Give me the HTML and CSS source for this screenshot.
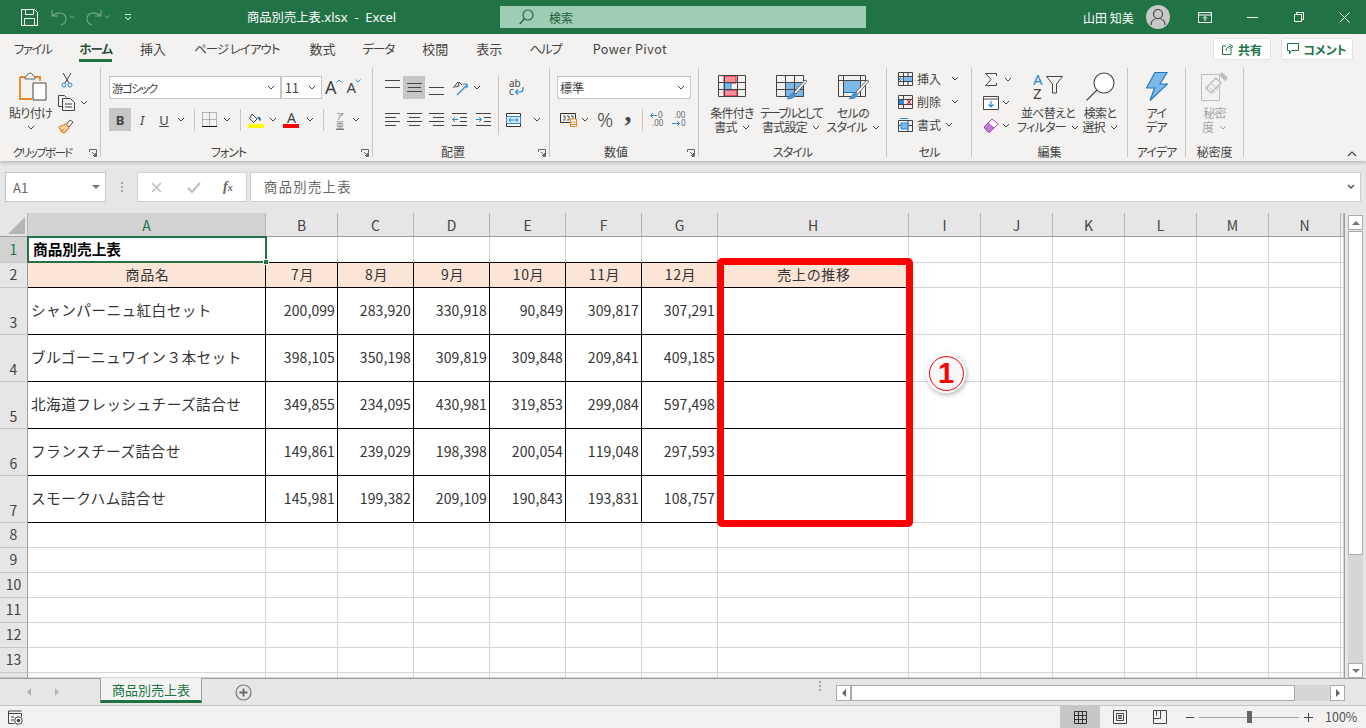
FILE: index.html
```html
<!DOCTYPE html>
<html lang="ja">
<head>
<meta charset="utf-8">
<title>商品別売上表.xlsx - Excel</title>
<link rel="stylesheet" href="styles.css">
</head>
<body>
<header class="titlebar">
  <div class="qat">
    <svg class="ic-save" width="17" height="17" viewBox="0 0 17 17"><path d="M.5.500h13l3 3v13H.5zM4.500.5v5h8v-5M3.500 16.500v-7h10v7" fill="none" stroke="#fff"/></svg>
    <svg class="ic-undo" width="16" height="17" viewBox="0 0 16 17"><path d="M1 1v6h6M1.500 7C5 2.500 15 3 15 10c0 3-2 5-5 6" fill="none" stroke="#6fa787" stroke-width="1.200"/></svg>
    <svg class="ic-qchev" width="6" height="4" viewBox="0 0 6 4"><path d="M.5.500L3 3 5.500.5" fill="none" stroke="#6fa787"/></svg>
    <svg class="ic-redo" width="16" height="17" viewBox="0 0 16 17"><path d="M15 1v6H9M14.500 7C11 2.500 1 3 1 10c0 3 2 5 5 6" fill="none" stroke="#6fa787" stroke-width="1.200"/></svg>
    <svg class="ic-qchev" width="6" height="4" viewBox="0 0 6 4"><path d="M.5.500L3 3 5.500.5" fill="none" stroke="#6fa787"/></svg>
    <svg class="ic-custom" width="8" height="6" viewBox="0 0 8 6"><path d="M1 .5h6M1 3l3 2.500L7 3" fill="none" stroke="#fff"/></svg>
  </div>
  <div class="doc-title">商品別売上表<span class="lat">.xlsx&nbsp; - &nbsp;Excel</span></div>
  <div class="searchbox">
    <svg width="15" height="16" viewBox="0 0 15 16"><circle cx="9" cy="6" r="5" fill="none" stroke="#1d5c3a" stroke-width="1.100"/><path d="M5.500 9.500L.8 15" stroke="#1d5c3a" stroke-width="1.200"/></svg>
    <span>検索</span>
  </div>
  <div class="user">山田 知美</div>
  <div class="avatar"><svg width="16" height="18" viewBox="0 0 16 18"><circle cx="8" cy="6" r="4.500" fill="none" stroke="#444" stroke-width="1.200"/><path d="M1 17c0-4 3-6.500 7-6.500s7 2.500 7 6.500" fill="none" stroke="#444" stroke-width="1.200"/></svg></div>
  <div class="winbtns">
    <svg width="14" height="11" viewBox="0 0 14 11"><path d="M.5.500h13v10H.5zM.5 3h13M7 9V4.500M5 6.500l2-2 2 2" fill="none" stroke="#fff"/></svg>
    <svg width="11" height="1" viewBox="0 0 11 1"><path d="M0 .5h11" stroke="#fff"/></svg>
    <svg width="10" height="10" viewBox="0 0 10 10"><path d="M.5 2.500h7v7h-7zM2.500 2.500v-2h7v7h-2" fill="none" stroke="#fff"/></svg>
    <svg width="11" height="11" viewBox="0 0 11 11"><path d="M.5.500l10 10M10.500.5l-10 10" stroke="#fff"/></svg>
  </div>
</header>

<nav class="tabs">
  <span class="tab kana k2">ファイル</span><span class="tab active kana">ホーム</span><span class="tab">挿入</span><span class="tab kana">ページ レイアウト</span><span class="tab nudge">数式</span><span class="tab kana">データ</span><span class="tab">校閲</span><span class="tab">表示</span><span class="tab kana k3">ヘルプ</span><span class="tab pp">Power Pivot</span>
  <div class="tab-actions">
    <button class="act act-share"><svg width="12" height="12" viewBox="0 0 12 12"><path d="M9 5.500v6H.5V3H4M4 8c0-3 2-4.500 5-4.500M7.500 1L11 3.500 7.500 6" fill="none" stroke="#217346"/></svg>共有</button>
    <button class="act act-comment"><svg width="12" height="12" viewBox="0 0 12 12"><path d="M.5.500h11v7H4.500L2.500 11V7.500h-2z" fill="none" stroke="#217346"/></svg>コメント</button>
  </div>
</nav>

<section class="ribbon">
  <div class="group g-clip">
    <div class="body row-body">
      <div class="big b-paste">
        <svg class="big-ic" width="28" height="29" viewBox="0 0 28 29"><path d="M1 5h5M16 5h5v4M1 5v22h12" fill="none" stroke="#e8871e" stroke-width="1.800"/><path d="M6 5c2 0 2-4 5-4s3 4 5 4v2H6z" fill="#f3f2f1" stroke="#666"/><path d="M14 11h13v17H14z" fill="#fff" stroke="#444"/></svg>
        <span class="lbl">貼り付け</span>
        <svg class="chev mid" width="8" height="5" viewBox="0 0 8 5"><path d="M1 1l3 3 3-3" fill="none" stroke="#444"/></svg>
      </div>
      <div class="col small-col">
        <div class="srow scis"><svg width="12" height="16" viewBox="0 0 12 16"><path d="M2 1l6 10M10 1L4 11" stroke="#444"/><circle cx="3" cy="13" r="2" fill="none" stroke="#2b88d8"/><circle cx="9" cy="13" r="2" fill="none" stroke="#2b88d8"/></svg></div>
        <div class="srow"><svg width="17" height="16" viewBox="0 0 17 16"><path d="M4 11.500H.5v-11h6l2 2" fill="none" stroke="#444"/><path d="M4.500 3.500h8l4 4v8h-12zM7 9h7M7 12h7" fill="#f3f2f1" stroke="#444"/></svg><svg class="chev c-copy" width="8" height="5" viewBox="0 0 8 5"><path d="M1 1l3 3 3-3" fill="none" stroke="#444"/></svg></div>
        <div class="srow"><svg width="16" height="16" viewBox="0 0 16 16"><path d="M8 7l4-5 3 2-4 5z" fill="none" stroke="#555"/><path d="M1 9l7-3 3 4-5 5-2-1 1-2-2 1z" fill="#f8d9a8" stroke="#e8871e" stroke-width="1.200"/></svg></div>
      </div>
    </div>
    <div class="glabel off kn clip">クリップボード</div>
    <svg class="launch" width="8" height="8" viewBox="0 0 8 8"><path d="M.5 3V.5H7.500v7H5M3 3l3.500 3.500M6.500 4v2.500H4" fill="none" stroke="#666"/></svg>
  </div>

  <div class="group g-font">
    <div class="body">
      <div class="trow">
        <div class="combo c-font"><span class="fname">游ゴシック</span><svg width="8" height="5" viewBox="0 0 8 5"><path d="M1 1l3 3 3-3" fill="none" stroke="#444"/></svg></div>
        <div class="combo c-size"><span>11</span><svg width="8" height="5" viewBox="0 0 8 5"><path d="M1 1l3 3 3-3" fill="none" stroke="#444"/></svg></div>
        <div class="grow-a g-up">A<svg width="6" height="4" viewBox="0 0 6 4"><path d="M.5 3.500L3 1l2.500 2.500" fill="none" stroke="#2b88d8"/></svg></div>
        <div class="grow-a g-down">A<svg width="6" height="4" viewBox="0 0 6 4"><path d="M.5.500L3 3 5.500.5" fill="none" stroke="#2b88d8"/></svg></div>
      </div>
      <div class="trow second">
        <div class="tb w22 on bold">B</div>
        <div class="tb w22 ital">I</div>
        <div class="tb w22 under">U</div>
        <div class="tb w12"><svg width="8" height="5" viewBox="0 0 8 5"><path d="M1 1l3 3 3-3" fill="none" stroke="#444"/></svg></div>
        <div class="tb w14"><i class="vsep"></i></div>
        <div class="tb w17"><svg width="15" height="15" viewBox="0 0 15 15"><path d="M.5.500h14M.5 7.500h14M7.500.5v14M.5.500v14M14.500.5v14" fill="none" stroke="#777" stroke-dasharray="1 1"/><path d="M0 14.500h15" stroke="#111"/></svg></div>
        <div class="tb w18"><svg width="8" height="5" viewBox="0 0 8 5"><path d="M1 1l3 3 3-3" fill="none" stroke="#444"/></svg></div>
        <div class="tb w8"><i class="vsep"></i></div>
        <div class="tb w23"><svg width="16" height="16" viewBox="0 0 16 16"><path d="M4 2l5 5-3.500 3.500L1.500 6.500z" fill="none" stroke="#444"/><path d="M9 5c3-1 4 1 4 4l-2-1z" fill="#1f6fb5"/><path d="M0 12h16v4H0z" fill="#ffff00"/></svg></div>
        <div class="tb w12"><svg width="8" height="5" viewBox="0 0 8 5"><path d="M1 1l3 3 3-3" fill="none" stroke="#444"/></svg></div>
        <div class="tb w25 fcolor">A</div>
        <div class="tb w12"><svg width="8" height="5" viewBox="0 0 8 5"><path d="M1 1l3 3 3-3" fill="none" stroke="#444"/></svg></div>
        <div class="tb w14"><i class="vsep"></i></div>
        <div class="tb w20 phon"><span>ア</span><span class="ph2">亜</span></div>
        <div class="tb w12"><svg width="8" height="5" viewBox="0 0 8 5"><path d="M1 1l3 3 3-3" fill="none" stroke="#444"/></svg></div>
      </div>
    </div>
    <div class="glabel off kn">フォント</div>
    <svg class="launch" width="8" height="8" viewBox="0 0 8 8"><path d="M.5 3V.5H7.500v7H5M3 3l3.500 3.500M6.500 4v2.500H4" fill="none" stroke="#666"/></svg>
  </div>

  <div class="group g-align">
    <div class="body row-body">
      <div class="col al-left">
        <div class="trow">
          <div class="tb w22 va-top"><svg width="15" height="8" viewBox="0 0 15 8"><path d="M0 .5h15M0 7.500h15" stroke="#444"/></svg></div>
          <div class="tb w22 on"><svg width="15" height="13" viewBox="0 0 15 13"><path d="M0 2.500h15M1 6.500h13M0 10.500h15" stroke="#444"/></svg></div>
          <div class="tb w22 va-bot"><svg width="15" height="8" viewBox="0 0 15 8"><path d="M0 .5h15M0 7.500h15" stroke="#444"/></svg></div>
          <div class="tb w26"><svg width="16" height="16" viewBox="0 0 16 16"><path d="M1 8l5-6 1 4-4 1M7 2l3 3" fill="none" stroke="#444"/><path d="M5 15L15 5M11 4h4v4" fill="none" stroke="#2b88d8" stroke-width="1.200"/></svg></div>
          <div class="tb w8"><svg width="8" height="5" viewBox="0 0 8 5"><path d="M1 1l3 3 3-3" fill="none" stroke="#444"/></svg></div>
        </div>
        <div class="trow second">
          <div class="tb w22"><svg width="15" height="13" viewBox="0 0 15 13"><path d="M0 .5h15M0 4.500h11M0 8.500h15M0 12.500h11" stroke="#444"/></svg></div>
          <div class="tb w22"><svg width="15" height="13" viewBox="0 0 15 13"><path d="M0 .5h15M2 4.500h11M0 8.500h15M2 12.500h11" stroke="#444"/></svg></div>
          <div class="tb w22"><svg width="15" height="13" viewBox="0 0 15 13"><path d="M0 .5h15M4 4.500h11M0 8.500h15M4 12.500h11" stroke="#444"/></svg></div>
          <div class="tb w24"><svg width="15" height="13" viewBox="0 0 15 13"><path d="M0 .5h15M8 4.500h7M8 8.500h7M0 12.500h15" stroke="#444"/><path d="M6 6.500H.5M3 4L.5 6.500 3 9" fill="none" stroke="#2b88d8"/></svg></div>
          <div class="tb w24"><svg width="15" height="13" viewBox="0 0 15 13"><path d="M0 .5h15M8 4.500h7M8 8.500h7M0 12.500h15" stroke="#444"/><path d="M0 6.500h5.500M3 4l2.500 2.500L3 9" fill="none" stroke="#2b88d8"/></svg></div>
        </div>
      </div>
      <div class="col al-right">
        <div class="trow">
          <div class="tb w34"><svg class="wrap-ic" width="16" height="18" viewBox="0 0 16 18"><text x="1" y="8" class="svg-ab">ab</text><text x="1" y="16" class="svg-ab">c</text><path d="M15 8v2c0 2-1 3-3 3H8M10 10.500L7.500 13l2.500 2.500" fill="none" stroke="#2b88d8" stroke-width="1.200"/></svg></div>
        </div>
        <div class="trow second">
          <div class="tb w28"><svg width="15" height="14" viewBox="0 0 15 14"><path d="M.5.500h14v13H.5zM.5 3.500h14M.5 10.500h14" fill="#fff" stroke="#333"/><path d="M.5 3.500h14v7H.5z" fill="#dbeaf7" stroke="#2b88d8"/><path d="M3 7h9M5 5L3 7l2 2M10 5l2 2-2 2" fill="none" stroke="#2b88d8"/></svg></div>
          <div class="tb w8 ml-chev"><svg width="8" height="5" viewBox="0 0 8 5"><path d="M1 1l3 3 3-3" fill="none" stroke="#444"/></svg></div>
        </div>
      </div>
    </div>
    <div class="glabel off">配置</div>
    <svg class="launch" width="8" height="8" viewBox="0 0 8 8"><path d="M.5 3V.5H7.500v7H5M3 3l3.500 3.500M6.500 4v2.500H4" fill="none" stroke="#666"/></svg>
  </div>

  <div class="group g-num">
    <div class="body">
      <div class="trow">
        <div class="combo c-num"><span>標準</span><svg width="8" height="5" viewBox="0 0 8 5"><path d="M1 1l3 3 3-3" fill="none" stroke="#444"/></svg></div>
      </div>
      <div class="trow second">
        <div class="tb w22"><svg width="17" height="15" viewBox="0 0 17 15"><path d="M.5 1.500h15v9H.5z" fill="#f3f2f1" stroke="#333"/><path d="M3 4h2v4H3M7 4h2v4H7M11 4h2v4h-2" fill="none" stroke="#555"/><path d="M10.500 7h6v7.500h-6zM10.500 10h6M10.500 12.500h6" fill="#fff" stroke="#e8871e"/></svg></div>
        <div class="tb w12"><svg width="8" height="5" viewBox="0 0 8 5"><path d="M1 1l3 3 3-3" fill="none" stroke="#444"/></svg></div>
        <div class="tb w28 pct">%</div>
        <div class="tb w18 cma">,</div>
        <div class="tb w10"><i class="vsep"></i></div>
        <div class="tb w22"><svg class="dec-ic" width="16" height="15" viewBox="0 0 16 15"><text x="8" y="6" class="svg-dec">0</text><text x="2" y="14" class="svg-dec">.00</text><path d="M7 3.500H.5M3 1L.5 3.500 3 6" fill="none" stroke="#2b88d8"/></svg></div>
        <div class="tb w22"><svg class="dec-ic" width="16" height="15" viewBox="0 0 16 15"><text x="2" y="6" class="svg-dec">.00</text><text x="9" y="14" class="svg-dec">0</text><path d="M0 11.500h7M5 9l2.500 2.500L5 14" fill="none" stroke="#2b88d8"/></svg></div>
      </div>
    </div>
    <div class="glabel off">数値</div>
    <svg class="launch" width="8" height="8" viewBox="0 0 8 8"><path d="M.5 3V.5H7.500v7H5M3 3l3.500 3.500M6.500 4v2.500H4" fill="none" stroke="#666"/></svg>
  </div>

  <div class="group g-style">
    <div class="body row-body">
      <div class="big b-cond">
        <svg class="st-ic" width="28" height="22" viewBox="0 0 28 22"><path d="M6 1h12v7H6zM15 15h-9v6h13v-6z" fill="#ff8f99"/><path d="M6 1h12v7H6zM6 15h13v6H6z" fill="none" stroke="#e81123"/><path d="M6 8h7v7H6z" fill="#7db8e8" stroke="#2b88d8"/><path d="M.5.500h27v21H.5zM.5 7.500h27M.5 14.500h27M6.500.5v21M19.500.5v21" fill="none" stroke="#444"/></svg>
        <span class="lbl">条件付き</span>
        <span class="lbl">書式<svg class="chev" width="8" height="5" viewBox="0 0 8 5"><path d="M1 1l3 3 3-3" fill="none" stroke="#444"/></svg></span>
      </div>
      <div class="big b-table">
        <svg class="st-ic" width="31" height="26" viewBox="0 0 31 26"><path d="M9.500 7.500h18v14h-18z" fill="#7db8e8" stroke="#1f6fb5"/><path d="M.5.500h27v21H.5zM.5 7.500h27M.5 14.500h27M9.500.5v21M18.500.5v21" fill="none" stroke="#444"/><path d="M29 5l2 1-11 13-2-2z" fill="#fff" stroke="#666"/><path d="M17 17l3 3c-1 3-5 5-10 4 3-1 3-5 7-7z" fill="#4a90d0"/></svg>
        <span class="lbl tight">テーブルとして</span>
        <span class="lbl">書式設定<svg class="chev" width="8" height="5" viewBox="0 0 8 5"><path d="M1 1l3 3 3-3" fill="none" stroke="#444"/></svg></span>
      </div>
      <div class="big b-cell">
        <svg class="st-ic" width="31" height="26" viewBox="0 0 31 26"><path d="M5.500 5.500h17v12h-17z" fill="#7db8e8" stroke="#1f6fb5"/><path d="M.5.500h27v21H.5zM.5 5.500h27M5.500.5v21M22.500.5v21" fill="none" stroke="#444"/><path d="M29 5l2 1-11 13-2-2z" fill="#fff" stroke="#666"/><path d="M17 17l3 3c-1 3-5 5-10 4 3-1 3-5 7-7z" fill="#4a90d0"/></svg>
        <span class="lbl">セルの</span>
        <span class="lbl">スタイル<svg class="chev" width="8" height="5" viewBox="0 0 8 5"><path d="M1 1l3 3 3-3" fill="none" stroke="#444"/></svg></span>
      </div>
    </div>
    <div class="glabel kn">スタイル</div>
  </div>

  <div class="group g-cells">
    <div class="body col">
      <div class="crow"><svg width="15" height="14" viewBox="0 0 15 14"><path d="M.5.500h14v13H.5zM.5 4.500h14M.5 9.500h14M5.500.5v13M10 .5v13" fill="none" stroke="#444"/><path d="M6 5h8v4H6z" fill="#7db8e8"/><path d="M1 7h5M3 5L1 7l2 2" fill="none" stroke="#2b88d8"/></svg><span>挿入</span><svg class="chev ch-a" width="8" height="5" viewBox="0 0 8 5"><path d="M1 1l3 3 3-3" fill="none" stroke="#444"/></svg></div>
      <div class="crow"><svg width="15" height="14" viewBox="0 0 15 14"><path d="M.5.500h14v13H.5zM.5 4.500h14M.5 9.500h14M5.500.5v13" fill="none" stroke="#444"/><path d="M1 5h5v4H1z" fill="#2b88d8"/><path d="M9 4.500l4 5M13 4.500l-4 5" stroke="#e81123" stroke-width="1.200"/></svg><span>削除</span><svg class="chev ch-a" width="8" height="5" viewBox="0 0 8 5"><path d="M1 1l3 3 3-3" fill="none" stroke="#444"/></svg></div>
      <div class="crow"><svg width="15" height="14" viewBox="0 0 15 14"><path d="M.5 2.500h14v11H.5zM.5 7.500h14M10 2.500v11" fill="none" stroke="#444"/><path d="M3 5h7v6H3z" fill="#7db8e8" stroke="#2b88d8"/><path d="M2 .5h8" stroke="#2b88d8"/></svg><span>書式</span><svg class="chev ch-b" width="8" height="5" viewBox="0 0 8 5"><path d="M1 1l3 3 3-3" fill="none" stroke="#444"/></svg></div>
    </div>
    <div class="glabel kn">セル</div>
  </div>

  <div class="group g-edit">
    <div class="body row-body">
      <div class="col ed-col">
        <div class="erow"><svg class="sig" width="12" height="13" viewBox="0 0 12 13"><path d="M11.500 3V.5H.5L6 6.500.5 12.500h11V10" fill="none" stroke="#444"/></svg><svg class="chev ed-a" width="8" height="5" viewBox="0 0 8 5"><path d="M1 1l3 3 3-3" fill="none" stroke="#444"/></svg></div>
        <div class="erow"><svg width="16" height="14" viewBox="0 0 16 14"><path d="M.5.500h15v13H.5zM.5 3h15" fill="#fff" stroke="#444"/><path d="M8 5v6M5.500 8.500L8 11l2.500-2.500" fill="none" stroke="#2b88d8" stroke-width="1.200"/></svg><svg class="chev ed-b" width="8" height="5" viewBox="0 0 8 5"><path d="M1 1l3 3 3-3" fill="none" stroke="#444"/></svg></div>
        <div class="erow"><svg width="16" height="15" viewBox="0 0 16 15"><path d="M1 9l8-8 6 5-8 8H5z" fill="#fff" stroke="#b146c2"/><path d="M1 9l4-4 6 5-4 4H5z" fill="#c27bd0" stroke="#b146c2"/></svg><svg class="chev ed-b" width="8" height="5" viewBox="0 0 8 5"><path d="M1 1l3 3 3-3" fill="none" stroke="#444"/></svg></div>
      </div>
      <div class="big b-sort">
        <div class="sort-ic"><span class="az"><b>A</b><i>Z</i></span><svg width="17" height="18" viewBox="0 0 17 18"><path d="M.5.500h16L10.500 8v9h-4V8z" fill="none" stroke="#444"/></svg></div>
        <span class="lbl">並べ替えと</span>
        <span class="lbl">フィルター<svg class="chev" width="8" height="5" viewBox="0 0 8 5"><path d="M1 1l3 3 3-3" fill="none" stroke="#444"/></svg></span>
      </div>
      <div class="big b-find">
        <svg class="tall-ic" width="29" height="29" viewBox="0 0 29 29"><circle cx="18" cy="11" r="10" fill="#fff" stroke="#444" stroke-width="1.100"/><path d="M11 18L.5 28.500" stroke="#444" stroke-width="1.100"/></svg>
        <span class="lbl">検索と</span>
        <span class="lbl">選択<svg class="chev" width="8" height="5" viewBox="0 0 8 5"><path d="M1 1l3 3 3-3" fill="none" stroke="#444"/></svg></span>
      </div>
    </div>
    <div class="glabel">編集</div>
  </div>

  <div class="group g-idea">
    <div class="body row-body">
      <div class="big b-full">
        <svg class="tall-ic" width="22" height="29" viewBox="0 0 22 29"><path d="M9 .5h12L14 12h7.500L4 28.500 8.500 16H.5z" fill="#7db8e8" stroke="#1f78c8" stroke-width="1.200"/></svg>
        <span class="lbl">アイ</span>
        <span class="lbl">デア</span>
      </div>
    </div>
    <div class="glabel kn">アイデア</div>
  </div>

  <div class="group g-sens">
    <div class="body row-body">
      <div class="big b-full dis">
        <svg class="tall-ic" width="28" height="29" viewBox="0 0 28 29"><path d="M.5 2.500h18v26H.5z" fill="none" stroke="#bdbdbd"/><path d="M5 16L15 6l5 5-10 10z" fill="#f3f2f1" stroke="#bdbdbd" stroke-width="1.500"/><path d="M8 15l6 6M11 12l6 6" stroke="#bdbdbd"/><path d="M18 3l3-3 6 6-3 3z" fill="#bdbdbd"/></svg>
        <span class="lbl">秘密</span>
        <span class="lbl">度<svg class="chev" width="8" height="5" viewBox="0 0 8 5"><path d="M1 1l3 3 3-3" fill="none" stroke="#a6a6a6"/></svg></span>
      </div>
    </div>
    <div class="glabel">秘密度</div>
  </div>
  <svg class="collapse" width="10" height="6" viewBox="0 0 10 6"><path d="M1 5l4-4 4 4" fill="none" stroke="#444" stroke-width="1.200"/></svg>
</section>

<section class="fbar">
  <div class="namebox"><span>A1</span><i class="tri"></i></div>
  <div class="fdots"><i></i><i></i><i></i></div>
  <div class="fxbtns">
    <svg width="11" height="11" viewBox="0 0 11 11"><path d="M1 1l9 9M10 1l-9 9" stroke="#bdbdbd" stroke-width="1.500"/></svg>
    <svg width="14" height="11" viewBox="0 0 14 11"><path d="M1 6l4 4 8-9" fill="none" stroke="#bdbdbd" stroke-width="2"/></svg>
    <span class="fx">f<small>x</small></span>
  </div>
  <div class="finput"><span>商品別売上表</span><svg width="8" height="5" viewBox="0 0 8 5"><path d="M1 1l3 3 3-3" fill="none" stroke="#555" stroke-width="1.500"/></svg></div>
</section>

<section class="sheetwrap">
  <div class="grid">
    <div class="corner"><svg width="17" height="17" viewBox="0 0 17 17"><path d="M17 0v17H0z" fill="#b5b5b5"/></svg></div><div class="ch sel">A</div><div class="ch">B</div><div class="ch">C</div><div class="ch">D</div><div class="ch">E</div><div class="ch">F</div><div class="ch">G</div><div class="ch">H</div><div class="ch">I</div><div class="ch">J</div><div class="ch">K</div><div class="ch">L</div><div class="ch">M</div><div class="ch">N</div><div class="ch"></div>

    <div class="rh sel r1">1</div><div class="c bb t strong">商品別売上表</div><div class="c bb"></div><div class="c bb"></div><div class="c bb"></div><div class="c bb"></div><div class="c bb"></div><div class="c bb"></div><div class="c bb"></div><div class="c"></div><div class="c"></div><div class="c"></div><div class="c"></div><div class="c"></div><div class="c"></div><div class="c"></div>

    <div class="rh r1">2</div><div class="c b h">商品名</div><div class="c b h">7月</div><div class="c b h">8月</div><div class="c b h">9月</div><div class="c b h">10月</div><div class="c b h">11月</div><div class="c b h">12月</div><div class="c b h">売上の推移</div><div class="c"></div><div class="c"></div><div class="c"></div><div class="c"></div><div class="c"></div><div class="c"></div><div class="c"></div>

    <div class="rh">3</div><div class="c b t">シャンパーニュ紅白セット</div><div class="c b n">200,099</div><div class="c b n">283,920</div><div class="c b n">330,918</div><div class="c b n">90,849</div><div class="c b n">309,817</div><div class="c b n">307,291</div><div class="c b"></div><div class="c"></div><div class="c"></div><div class="c"></div><div class="c"></div><div class="c"></div><div class="c"></div><div class="c"></div>

    <div class="rh">4</div><div class="c b t">ブルゴーニュワイン３本セット</div><div class="c b n">398,105</div><div class="c b n">350,198</div><div class="c b n">309,819</div><div class="c b n">309,848</div><div class="c b n">209,841</div><div class="c b n">409,185</div><div class="c b"></div><div class="c"></div><div class="c"></div><div class="c"></div><div class="c"></div><div class="c"></div><div class="c"></div><div class="c"></div>

    <div class="rh">5</div><div class="c b t">北海道フレッシュチーズ詰合せ</div><div class="c b n">349,855</div><div class="c b n">234,095</div><div class="c b n">430,981</div><div class="c b n">319,853</div><div class="c b n">299,084</div><div class="c b n">597,498</div><div class="c b"></div><div class="c"></div><div class="c"></div><div class="c"></div><div class="c"></div><div class="c"></div><div class="c"></div><div class="c"></div>

    <div class="rh">6</div><div class="c b t">フランスチーズ詰合せ</div><div class="c b n">149,861</div><div class="c b n">239,029</div><div class="c b n">198,398</div><div class="c b n">200,054</div><div class="c b n">119,048</div><div class="c b n">297,593</div><div class="c b"></div><div class="c"></div><div class="c"></div><div class="c"></div><div class="c"></div><div class="c"></div><div class="c"></div><div class="c"></div>

    <div class="rh">7</div><div class="c b t">スモークハム詰合せ</div><div class="c b n">145,981</div><div class="c b n">199,382</div><div class="c b n">209,109</div><div class="c b n">190,843</div><div class="c b n">193,831</div><div class="c b n">108,757</div><div class="c b"></div><div class="c"></div><div class="c"></div><div class="c"></div><div class="c"></div><div class="c"></div><div class="c"></div><div class="c"></div>

    <div class="rh r1">8</div><div class="c"></div><div class="c"></div><div class="c"></div><div class="c"></div><div class="c"></div><div class="c"></div><div class="c"></div><div class="c"></div><div class="c"></div><div class="c"></div><div class="c"></div><div class="c"></div><div class="c"></div><div class="c"></div><div class="c"></div>
    <div class="rh r1">9</div><div class="c"></div><div class="c"></div><div class="c"></div><div class="c"></div><div class="c"></div><div class="c"></div><div class="c"></div><div class="c"></div><div class="c"></div><div class="c"></div><div class="c"></div><div class="c"></div><div class="c"></div><div class="c"></div><div class="c"></div>
    <div class="rh r1">10</div><div class="c"></div><div class="c"></div><div class="c"></div><div class="c"></div><div class="c"></div><div class="c"></div><div class="c"></div><div class="c"></div><div class="c"></div><div class="c"></div><div class="c"></div><div class="c"></div><div class="c"></div><div class="c"></div><div class="c"></div>
    <div class="rh r1">11</div><div class="c"></div><div class="c"></div><div class="c"></div><div class="c"></div><div class="c"></div><div class="c"></div><div class="c"></div><div class="c"></div><div class="c"></div><div class="c"></div><div class="c"></div><div class="c"></div><div class="c"></div><div class="c"></div><div class="c"></div>
    <div class="rh r1">12</div><div class="c"></div><div class="c"></div><div class="c"></div><div class="c"></div><div class="c"></div><div class="c"></div><div class="c"></div><div class="c"></div><div class="c"></div><div class="c"></div><div class="c"></div><div class="c"></div><div class="c"></div><div class="c"></div><div class="c"></div>
    <div class="rh r1">13</div><div class="c"></div><div class="c"></div><div class="c"></div><div class="c"></div><div class="c"></div><div class="c"></div><div class="c"></div><div class="c"></div><div class="c"></div><div class="c"></div><div class="c"></div><div class="c"></div><div class="c"></div><div class="c"></div><div class="c"></div>
    <div class="rh"></div><div class="c"></div><div class="c"></div><div class="c"></div><div class="c"></div><div class="c"></div><div class="c"></div><div class="c"></div><div class="c"></div><div class="c"></div><div class="c"></div><div class="c"></div><div class="c"></div><div class="c"></div><div class="c"></div><div class="c"></div>
  </div>
  <div class="vscroll">
    <div class="sbtn"><i class="tri up"></i></div>
    <div class="vthumb"></div>
    <div class="vtrack"></div>
    <div class="sbtn"><i class="tri"></i></div>
  </div>
  <div class="selbox"><i></i></div>
  <div class="redbox"></div>
  <div class="marker"><span>1</span></div>
</section>

<section class="sheettabs">
  <div class="navs"><i class="tri left"></i><i class="tri right"></i></div>
  <div class="sheettab">商品別売上表</div>
  <svg class="addsheet" width="17" height="17" viewBox="0 0 17 17"><circle cx="8.500" cy="8.500" r="7.500" fill="none" stroke="#777" stroke-width="1.200"/><path d="M8.500 4.500v8M4.500 8.500h8" stroke="#666" stroke-width="1.800"/></svg>
  <div class="fdots hdots"><i></i><i></i><i></i></div>
  <div class="hscroll">
    <div class="sbtn h"><i class="tri left dark"></i></div>
    <div class="hthumb"></div>
    <div class="htrack"></div>
    <div class="sbtn h"><i class="tri right dark"></i></div>
  </div>
</section>

<footer class="status">
  <svg class="macro" width="15" height="15" viewBox="0 0 15 15"><path d="M.5 1h13M.5 3.500h13v3M.5 1v12.500h6M3 7h3M3 10h3" fill="none" stroke="#444"/><circle cx="10.500" cy="10.500" r="3.800" fill="#f3f2f1" stroke="#444"/><circle cx="10.500" cy="10.500" r="1.700" fill="#444"/></svg>
  <div class="viewbtn on"><svg width="13" height="13" viewBox="0 0 13 13"><path d="M.5.500h12v12H.5zM4.500.5v12M8.500.5v12M.5 4.500h12M.5 8.500h12" fill="none" stroke="#333"/></svg></div>
  <div class="viewbtn v2"><svg width="14" height="14" viewBox="0 0 14 14"><path d="M.5.500h13v13H.5zM3.500 3.500h7v7h-7zM5 5.500h4M5 7h4M5 8.500h4" fill="none" stroke="#444"/></svg></div>
  <div class="viewbtn v3"><svg width="14" height="14" viewBox="0 0 14 14"><path d="M.5.500h13v13H.5zM.5 8.500h7V.5M3.500.5v5" fill="none" stroke="#444"/></svg></div>
  <svg class="zminus" width="8" height="1" viewBox="0 0 8 1"><path d="M0 .5h8" stroke="#444"/></svg>
  <div class="slider"><i></i></div>
  <svg class="zplus" width="9" height="9" viewBox="0 0 9 9"><path d="M0 4.500h9M4.500 0v9" stroke="#444"/></svg>
  <span class="zoomtxt">100%</span>
</footer>
</body>
</html>
```
FILE: styles.css
```css
* { box-sizing: border-box; }
html, body { margin: 0; padding: 0; }
body {
  width: 1366px; height: 728px; overflow: hidden;
  font-family: "Noto Sans CJK JP", "Noto Sans", sans-serif;
  font-size: 12px; color: #444; background: #f3f2f1;
}
svg { display: block; flex: none; }
i { font-style: normal; }

/* title bar */
.titlebar { height: 34px; background: #217346; color: #fff; display: flex; align-items: center; position: relative; }
.qat { display: flex; align-items: center; width: 247px; padding-left: 21px; flex: none; }
.ic-undo { margin-left: 13px; }
.ic-redo { margin-left: 11px; }
.ic-qchev { margin-left: 2px; }
.ic-custom { margin-left: 14px; }
.doc-title { width: 253px; flex: none; font-size: 12.3px; white-space: nowrap; }
.lat { font-family: "Noto Sans", sans-serif; font-size: 13px; }
.searchbox { width: 366px; height: 22px; background: #9fcdb3; flex: none; display: flex; align-items: center; padding-left: 19px; color: #1d5c3a; }
.searchbox span { margin-left: 15px; }
.user { margin-left: 217px; width: 63px; flex: none; white-space: nowrap; }
.avatar { width: 24px; height: 24px; border-radius: 50%; background: #c8c8c8; display: flex; align-items: center; justify-content: center; flex: none; }
.winbtns { display: flex; align-items: center; flex: none; margin-left: 28px; }
.winbtns svg:nth-child(2) { margin-left: 35px; }
.winbtns svg:nth-child(3) { margin-left: 36px; }
.winbtns svg:nth-child(4) { margin-left: 35px; }

/* tabs */
.tabs { height: 32px; display: flex; align-items: flex-start; background: #f3f2f1; position: relative; padding-top: 3px; }
.tab { padding: 0 14px; height: 25px; line-height: 23px; font-size: 13px; color: #444; white-space: nowrap; position: relative; font-feature-settings: "palt"; }
.tab.nudge { padding: 0 13px 0 16px; }
.tab.kana { font-size: 12.5px; letter-spacing: -1px; }
.tab.k2 { letter-spacing: -1.5px; }
.tab.k3 { letter-spacing: -1.2px; padding-left: 13px; }
.tab.active { font-weight: 700; color: #2f4f3e; }
.tab.active::after { content: ""; position: absolute; left: 14px; right: 14px; bottom: 0; height: 3px; background: #217346; }
.tab.pp { padding-left: 17px; font-size: 12.5px; letter-spacing: .45px; }
.tab-actions { position: absolute; top: 4px; right: 13px; display: flex; gap: 10px; }
.act { height: 22px; background: #fff; border: 1px solid #e3e3e3; border-radius: 2px; display: flex; align-items: center; justify-content: center; gap: 4px; font: 700 12px "Noto Sans CJK JP", sans-serif; font-feature-settings: "palt"; color: #217346; padding: 0; }
.act-share { width: 58px; }
.act-comment { width: 72px; }

/* ribbon */
.ribbon { height: 95px; display: flex; align-items: flex-start; padding-top: 2px; background: #f3f2f1; position: relative; box-shadow: 0 2px 3px rgba(0,0,0,.18); z-index: 2; }
.group { height: 89px; border-right: 1px solid #c8c6c4; position: relative; flex: none; }
.g-clip { width: 101px; }
.g-font { width: 272px; padding-left: 8px; }
.g-align { width: 177px; padding-left: 8px; }
.g-num { width: 149px; padding-left: 7px; }
.g-style { width: 188px; padding-left: 7px; }
.g-cells { width: 85px; padding-left: 11px; }
.g-edit { width: 156px; padding-left: 11px; }
.g-idea { width: 58px; }
.g-sens { width: 58px; }
.body { height: 76px; padding-top: 8px; }
.row-body { display: flex; padding-top: 0; }
.col { display: flex; flex-direction: column; }
.g-cells .body { padding-top: 0; margin-top: -1px; }
.glabel { height: 13px; line-height: 16px; text-align: center; font-size: 12px; font-feature-settings: "palt"; color: #444; white-space: nowrap; position: absolute; left: 0; right: 0; top: 76px; }
.glabel.kn { letter-spacing: -1px; }
.glabel.off { right: 16px; }
.glabel.clip { font-size: 11.5px; letter-spacing: -1.7px; }
.launch { position: absolute; right: 3px; bottom: 0; }
.collapse { position: absolute; right: 9px; top: 85px; }
.lbl { display: flex; align-items: center; justify-content: center; height: 14px; line-height: 14px; font-size: 12px; letter-spacing: -.7px; font-feature-settings: "palt"; white-space: nowrap; gap: 5px; }
.lbl.tight { letter-spacing: -1.9px; }
.big { display: flex; flex-direction: column; align-items: center; flex: none; padding-top: 4px; }
.b-paste { width: 57px; padding-left: 4px; }
.b-paste .big-ic { margin: 0 0 5px 5px; }
.b-paste .mid { margin-top: 5px; }
.small-col { padding-left: 1px; }
.srow { height: 23px; display: flex; align-items: center; }
.scis { padding-left: 3px; }
.c-copy { margin-left: 5px; }
.trow { height: 23px; display: flex; align-items: center; }
.trow.second { margin-top: 9px; }
.combo { height: 23px; background: #fff; border: 1px solid #c6c6c6; display: flex; align-items: center; justify-content: space-between; padding: 0 5px 0 2px; font-size: 12px; flex: none; color: #444; }
.fname { font-size: 11.5px; letter-spacing: -1.5px; font-feature-settings: "palt"; }
.c-font { width: 172px; }
.c-size { width: 41px; padding-left: 3px; font-size: 12.5px; }
.c-num { width: 134px; }
.grow-a { flex: none; font-size: 17px; display: flex; align-items: flex-start; line-height: 23px; color: #444; font-family: "Noto Sans", sans-serif; }
.grow-a svg { margin-top: 3px; margin-left: -1px; }
.g-up { margin-left: 3px; font-size: 18px; }
.g-down { margin-left: 5px; font-size: 15px; }
.tb { height: 23px; display: flex; align-items: center; justify-content: center; flex: none; }
.tb.on { background: #c6c6c6; }
.w8 { width: 8px; } .w10 { width: 10px; } .w12 { width: 12px; } .w14 { width: 14px; } .w17 { width: 17px; } .w18 { width: 18px; } .w20 { width: 20px; } .w22 { width: 22px; } .w23 { width: 23px; } .w24 { width: 24px; } .w25 { width: 25px; } .w26 { width: 26px; } .w28 { width: 28px; } .w34 { width: 34px; }
.vsep { display: block; width: 1px; height: 22px; background: #c8c6c4; }
.bold { font-weight: 700; font-family: "Noto Sans", sans-serif; font-size: 13px; }
.ital { font-style: italic; font-family: "Noto Sans", sans-serif; font-size: 13px; }
.under { text-decoration: underline; font-family: "Noto Sans", sans-serif; font-size: 13px; }
.fcolor { font-family: "Noto Sans", sans-serif; font-size: 14px; line-height: 15px; padding-bottom: 4px; position: relative; }
.fcolor::after { content: ""; position: absolute; left: 4px; right: 5px; bottom: 3px; height: 4px; background: #ff0000; }
.phon { flex-direction: column; font-size: 8px; line-height: 9px; color: #777; }
.ph2 { text-decoration: underline; }
.va-top { padding-bottom: 7px; }
.va-bot { padding-top: 7px; }
.g-align .row-body { padding-top: 8px; }
.al-left { width: 117px; flex: none; }
.al-right { border-left: 1px solid #c8c6c4; height: 60px; margin-top: -1px; padding-top: 1px; }
.ml-chev { margin-left: 6px; }
.wrap-ic, .dec-ic { overflow: visible; }
.svg-ab { font: 10px "Noto Sans", sans-serif; fill: #444; }
.svg-dec { font: 8px "Noto Sans", sans-serif; fill: #666; }
.pct { font-size: 20px; font-family: "Noto Sans", sans-serif; font-weight: 300; }
.cma { font-size: 28px; font-family: "Liberation Serif", serif; font-weight: 700; padding-bottom: 16px; }
.st-ic { margin-top: 3px; margin-bottom: 5px; height: 26px; }
.b-cond { width: 52px; }
.b-table { width: 66px; }
.b-cell { width: 58px; }
.b-cond .st-ic { height: 22px; margin-bottom: 9px; }
.crow { height: 23px; display: flex; align-items: center; }
.crow span { margin-left: 4px; font-size: 12px; }
.ch-a { margin-left: 10px; }
.ch-b { margin-left: 4px; }
.ed-col { width: 35px; flex: none; }
.erow { height: 23px; display: flex; align-items: center; }
.sig { margin-left: 2px; }
.ed-a { margin-left: 7px; }
.ed-b { margin-left: 3px; }
.b-sort { width: 60px; }
.b-find { width: 44px; }
.sort-ic { display: flex; align-items: flex-end; height: 28px; margin-bottom: 6px; }
.az { display: flex; flex-direction: column; line-height: 14px; font-size: 15px; font-family: "Noto Sans", sans-serif; width: 12px; margin-right: 1px; }
.az b { font-weight: 400; color: #2b88d8; }
.az i { color: #444; }
.sort-ic svg { margin-bottom: 6px; }
.tall-ic { margin-bottom: 5px; }
.b-full { width: 100%; }
.dis .lbl { color: #a6a6a6; }

/* formula bar */
.fbar { height: 52px; background: #e6e6e6; display: flex; align-items: flex-start; padding: 11px 5px 0; }
.namebox { width: 101px; height: 30px; background: #fff; border: 1px solid #c6c6c6; display: flex; align-items: center; justify-content: space-between; padding: 0 5px 0 7px; font-size: 13px; color: #666; flex: none; }
.tri { display: block; width: 0; height: 0; border-left: 4px solid transparent; border-right: 4px solid transparent; border-top: 4px solid #777; }
.tri.up { border-top: 0; border-bottom: 4px solid #777; }
.tri.left { border: 4px solid transparent; border-left: 0; border-right: 4px solid #b3b3b3; }
.tri.right { border: 4px solid transparent; border-right: 0; border-left: 4px solid #b3b3b3; }
.tri.left.dark { border-right-color: #666; }
.tri.right.dark { border-left-color: #666; }
.fdots { width: 31px; flex: none; display: flex; flex-direction: column; align-items: center; gap: 2px; padding-top: 10px; }
.fdots i { width: 2px; height: 2px; background: #a6a6a6; display: block; }
.fxbtns { width: 110px; height: 30px; background: #fff; border: 1px solid #d0d0d0; display: flex; align-items: center; padding-left: 13px; flex: none; }
.fxbtns svg:nth-child(2) { margin-left: 25px; }
.fx { margin-left: 22px; font: italic 700 14px "Liberation Serif", serif; color: #666; }
.fx small { font-size: 10px; }
.finput { margin-left: 3px; width: 1111px; height: 30px; background: #fff; border: 1px solid #d0d0d0; flex: none; display: flex; align-items: center; justify-content: space-between; padding: 0 5px 2px 13px; font-size: 13.3px; color: #666; letter-spacing: 1.34px; }

/* sheet */
.sheetwrap { height: 465px; display: flex; background: #e6e6e6; position: relative; }
.grid { display: grid; width: 1345px; flex: none; border-right: 1px solid #9e9e9e; grid-template-columns: 28px 238px 72px 76px 76px 76px 76px 76px 191px 72px 72px 72px 72px 72px 72px 3px; grid-template-rows: 24px 26px 25px 47px 47px 47px 47px 47px 25px 25px 25px 25px 25px 25px 5px; background: #fff; overflow: hidden; }
.corner { background: #e6e6e6; border-right: 1px solid #b5b5b5; border-bottom: 1px solid #9e9e9e; display: flex; align-items: flex-end; justify-content: flex-end; padding: 0 2px 2px 0; }
.ch { background: #e6e6e6; border-right: 1px solid #b5b5b5; border-bottom: 1px solid #9e9e9e; display: flex; align-items: center; justify-content: center; font-size: 14px; color: #444; }
.ch.sel, .rh.sel { background: #d2d2d2; color: #217346; }
.rh { background: #e6e6e6; border-right: 1px solid #9e9e9e; border-bottom: 1px solid #c6c6c6; display: flex; align-items: flex-end; justify-content: center; font-size: 14px; line-height: 22px; padding-bottom: 1px; color: #444; }
.rh.r1 { align-items: center; padding-bottom: 2px; }
.c { background: #fff; border-right: 1px solid #d4d4d4; border-bottom: 1px solid #d4d4d4; font-size: 14.67px; color: #333; display: flex; align-items: center; justify-content: center; white-space: nowrap; }
.c.b { border-right-color: #000; border-bottom-color: #000; }
.c.bb { border-bottom-color: #000; }
.c.h { background: #fce4d6; font-size: 14px; letter-spacing: .7px; padding: 0 0 3px 2px; }
.c.t { justify-content: flex-start; padding-left: 3px; padding-bottom: 4px; letter-spacing: .42px; }
.c.n { justify-content: flex-end; padding: 0 2px 2px 0; font-size: 14px; letter-spacing: .1px; }
.c.strong { font-weight: 700; color: #000; padding-left: 5px; padding-bottom: 2px; letter-spacing: 0; }

.vscroll { width: 21px; flex: none; display: flex; flex-direction: column; align-items: center; padding-top: 2px; }
.sbtn { width: 15px; height: 15px; background: #fff; border: 1px solid #ababab; display: flex; align-items: center; justify-content: center; flex: none; }
.vthumb { width: 15px; height: 324px; background: #fff; border: 1px solid #ababab; margin-top: 1px; flex: none; }
.vtrack { width: 15px; flex: 1; background: #d6d6d6; }
.selbox { position: absolute; left: 27px; top: 23px; width: 240px; height: 27px; border: 2px solid #217346; }
.selbox i { position: absolute; right: -4px; bottom: -4px; width: 6px; height: 6px; background: #217346; border: 1px solid #fff; display: block; }
.redbox { position: absolute; left: 717px; top: 45px; width: 196px; height: 269px; border: 7px solid #ff0000; border-radius: 5px; }
.marker { position: absolute; left: 926px; top: 140px; width: 40px; height: 40px; border-radius: 50%; background: #fff; box-shadow: 1px 2px 5px rgba(0,0,0,.28); display: flex; align-items: center; justify-content: center; }
.marker span { width: 35px; height: 35px; border-radius: 50%; border: 1.500px solid #ff0000; background: #f7f7f7; color: #ff0000; font: 700 29px/32px "Liberation Sans", sans-serif; text-align: center; display: block; }

/* sheet tabs */
.sheettabs { height: 28px; background: #e6e6e6; border-top: 1px solid #9e9e9e; border-bottom: 1px solid #c8c6c4; display: flex; align-items: flex-start; position: relative; }
.navs { width: 100px; display: flex; gap: 24px; padding: 9px 0 0 27px; flex: none; }
.sheettab { width: 102px; height: 25px; background: #f3f3f3; border-left: 1px solid #9e9e9e; border-right: 1px solid #9e9e9e; border-bottom: 3px solid #217346; margin-top: -1px; color: #217346; font-size: 13px; text-align: center; line-height: 24px; flex: none; }
.addsheet { margin: 5px 0 0 33px; }
.hdots { position: absolute; left: 804px; top: -8px; }
.hscroll { position: absolute; left: 836px; top: 6px; width: 509px; height: 16px; display: flex; }
.sbtn.h { width: 15px; height: 16px; }
.hthumb { width: 444px; height: 16px; background: #fff; border: 1px solid #ababab; flex: none; }
.htrack { flex: 1; background: #d6d6d6; }

/* status */
.status { height: 22px; background: #f3f2f1; display: flex; align-items: center; position: relative; }
.macro { position: absolute; left: 8px; top: 4px; }
.viewbtn { position: absolute; top: 0; height: 22px; width: 40px; display: flex; align-items: center; justify-content: center; }
.viewbtn.on { left: 1060px; background: #c6c6c6; }
.v2 { left: 1100px; }
.v3 { left: 1140px; }
.zminus { position: absolute; left: 1186px; top: 11px; }
.slider { position: absolute; left: 1199px; top: 11px; width: 100px; height: 1px; background: #a6a6a6; }
.slider i { position: absolute; left: 48px; top: -6px; width: 5px; height: 12px; background: #666; display: block; }
.zplus { position: absolute; left: 1304px; top: 7px; }
.zoomtxt { position: absolute; left: 1325px; top: 3px; font-size: 12.5px; color: #555; line-height: 16px; }
```
